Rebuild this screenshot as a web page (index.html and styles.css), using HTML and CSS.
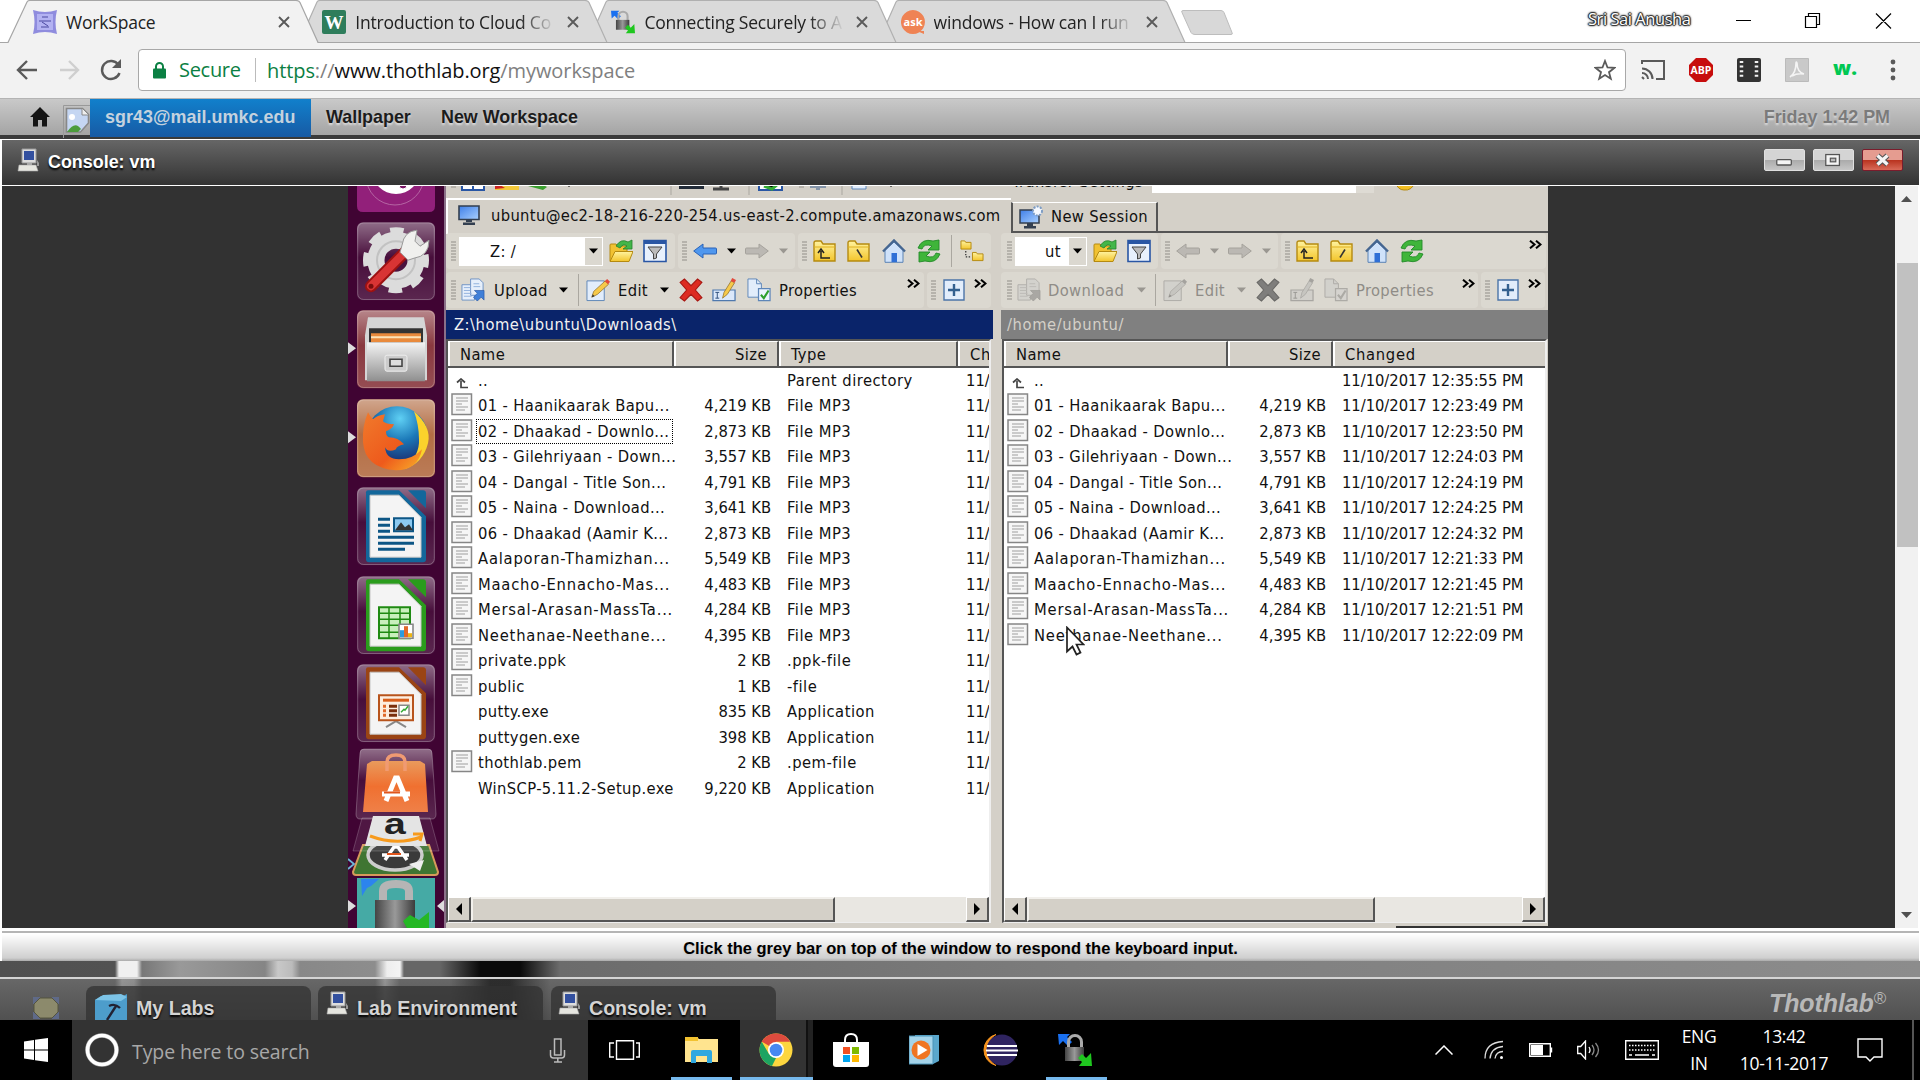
FILE: index.html
```html
<!DOCTYPE html>
<html lang="en">
<head>
<meta charset="utf-8">
<title>WorkSpace</title>
<link rel="stylesheet" href="styles.css">
</head>
<body>
<svg class="defs" width="0" height="0">
  <defs>
    <linearGradient id="gy" x1="0" y1="0" x2="0" y2="1"><stop offset="0" stop-color="#fff3a0"/><stop offset="1" stop-color="#f3c52c"/></linearGradient>
    <linearGradient id="gb" x1="0" y1="0" x2="1" y2="1"><stop offset="0" stop-color="#3f7fe8"/><stop offset="1" stop-color="#a9d0ff"/></linearGradient>
    <linearGradient id="gm" x1="0" y1="0" x2="1" y2="0"><stop offset="0" stop-color="#444"/><stop offset=".5" stop-color="#999"/><stop offset="1" stop-color="#3c3c3c"/></linearGradient>
    <linearGradient id="gs" x1="0" y1="0" x2="0" y2="1"><stop offset="0" stop-color="#f4f4f4"/><stop offset="1" stop-color="#8f8f8f"/></linearGradient>
    <linearGradient id="gor" x1="0" y1="0" x2="0" y2="1"><stop offset="0" stop-color="#e99a5c"/><stop offset=".5" stop-color="#f07030"/><stop offset="1" stop-color="#ef8048"/></linearGradient>
    <linearGradient id="gtile" x1="0" y1="0" x2="0" y2="1"><stop offset="0" stop-color="#fff" stop-opacity=".42"/><stop offset=".45" stop-color="#fff" stop-opacity=".04"/><stop offset="1" stop-color="#fff" stop-opacity=".14"/></linearGradient>
    <radialGradient id="gff" cx=".55" cy=".2" r=".8"><stop offset="0" stop-color="#5fd0f4"/><stop offset=".45" stop-color="#1b78b8"/><stop offset="1" stop-color="#1b1d60"/></radialGradient>
    <linearGradient id="gfox" x1="0" y1="0" x2="1" y2="1"><stop offset="0" stop-color="#f07a2c"/><stop offset=".6" stop-color="#ee5a1c"/><stop offset="1" stop-color="#f9b02a"/></linearGradient>
    <symbol id="grip" viewBox="0 0 5 20"><path d="M0 1h5M0 4h5M0 7h5M0 10h5M0 13h5M0 16h5M0 19h5" stroke="#aaa7a0" stroke-width="1.3"/></symbol>
    <symbol id="dd" viewBox="0 0 9 6"><path d="M0 .5h9L4.500 5.500z"/></symbol>
    <symbol id="folder" viewBox="0 0 24 24"><path d="M1 22V6q0-1 1-1h5l2 2h9v5" fill="#f1c232" stroke="#b58a10"/><path d="M1 22.500l5-10h18l-4 10z" fill="url(#gy)" stroke="#b58a10"/><path d="M7 7Q12-1 19 3l4-2v9h-9l4-3q-4-3-7 2z" fill="#43b649" stroke="#23822c" stroke-width=".8"/></symbol>
    <symbol id="filter" viewBox="0 0 24 24"><path d="M1 1.500h22v21H1z" fill="#e8f1fd" stroke="#2956a4" stroke-width="1.600"/><path d="M1 1h22v4H1z" fill="#2956a4"/><path d="M5 8h14l-5.500 7v4l-3 1v-5z" fill="#bbb" stroke="#444"/></symbol>
    <symbol id="back" viewBox="0 0 24 16"><path d="M.7 8L10 1v4h12.500q1 0 1 1v4q0 1-1 1H10v4z" fill="#4f97ee" stroke="#2a63b8"/></symbol>
    <symbol id="fwd" viewBox="0 0 24 16"><path d="M23.300 8L14 1v4H1.500q-1 0-1 1v4q0 1 1 1H14v4z" fill="#bbb8b3" stroke="#a5a29c"/></symbol>
    <symbol id="bk2" viewBox="0 0 24 16"><path d="M.7 8L10 1v4h12.500q1 0 1 1v4q0 1-1 1H10v4z" fill="#bbb8b3" stroke="#a5a29c"/></symbol>
    <symbol id="up" viewBox="0 0 24 22"><path d="M1 20V3q0-2 2-2h5l2 3h12v17H1z" fill="url(#gy)" stroke="#b58a10" stroke-width="1.400"/><path d="M1 7h21" stroke="#e0b020"/><path d="M17 18H8v-7M5 13l3-4 3 4" fill="none" stroke="#222" stroke-width="1.500"/></symbol>
    <symbol id="root" viewBox="0 0 24 22"><path d="M1 20V3q0-2 2-2h5l2 3h12v17H1z" fill="url(#gy)" stroke="#b58a10" stroke-width="1.400"/><path d="M1 7h21" stroke="#e0b020"/><path d="M10 9.500l5 8" fill="none" stroke="#333" stroke-width="1.600"/></symbol>
    <symbol id="root2" viewBox="0 0 24 22"><path d="M1 20V3q0-2 2-2h5l2 3h12v17H1z" fill="url(#gy)" stroke="#b58a10" stroke-width="1.400"/><path d="M1 7h21" stroke="#e0b020"/><path d="M15 9.500l-5 8" fill="none" stroke="#333" stroke-width="1.600"/></symbol>
    <symbol id="home" viewBox="0 0 24 24"><path d="M3 11v12.300h18V11L12 3z" fill="#cfe2fa" stroke="#5b83b5"/><path d="M1 12.500L12 1.500l11 11" fill="none" stroke="#456690" stroke-width="2.400"/><path d="M9.500 14h5.500v9H9.500z" fill="#2f6fd6"/></symbol>
    <symbol id="refresh" viewBox="0 0 24 24"><g fill="#3fb53a" stroke="#238a28" stroke-width=".9"><path d="M1 9Q5-1 16 2l6-1v10H11l4-4Q7 4 5 10z"/><path d="M23 15q-4 10-15 7l-6 1V13h11l-4 4q8 3 10-3z"/></g></symbol>
    <symbol id="tree" viewBox="0 0 25 24"><g fill="url(#gy)" stroke="#b58a10"><path d="M1 10V1.500h4l1 1.500h5.500v7z"/><path d="M13 22v-8.500h4l1 1.500h6v7z"/></g><path d="M6 12v6h6" fill="none" stroke="#333" stroke-dasharray="1.500 1.500" stroke-width="1.300"/></symbol>
    <symbol id="upload" viewBox="0 0 25 25"><path d="M1 7h13v16H1z" fill="#e6effb" stroke="#6e92c4"/><path d="M10 1h9l4 4v13H10z" fill="#e6effb" stroke="#6e92c4"/><path d="M3 10h7M3 13h7M3 16h8M3 19h8M13 6h6M13 9h7" stroke="#8fb0dc"/><path d="M14 13h10v10l-3-3-4 4-4-4 4-4z" fill="#3f7fd8" stroke="#2758a6" stroke-width=".7"/></symbol>
    <symbol id="edit" viewBox="0 0 25 25"><path d="M1 3h18v20.500H1z" fill="#e2edfb" stroke="#5e86b8"/><path d="M6 20l2-6L20 3l3.500 3.500L12 17z" fill="#f6c94a" stroke="#93722a" stroke-width=".8"/><path d="M19.500 3.500L22 1l3 3-2 2.500z" fill="#e24a3c"/><path d="M6 20l1-3 2 2z" fill="#333"/></symbol>
    <symbol id="del" viewBox="0 0 22 22"><path d="M1 4l4-3 6 6 6-6 4 3-6 7 6 7-4 3-6-6-6 6-4-3 6-7z" fill="#dd2c22" stroke="#a81712"/></symbol>
    <symbol id="rename" viewBox="0 0 25 25"><path d="M1 12.500h23v11H1z" fill="#dbe8fa" stroke="#4f79ae" stroke-width="1.300"/><path d="M3.500 15h4M3.500 21h4M5.500 15v6" stroke="#2d4e7c"/><path d="M11 21l1.500-6L20 3l3.500 2L16 17z" fill="#f6c94a" stroke="#93722a" stroke-width=".8"/><path d="M19.500 3L21 0l4 2-1.500 3z" fill="#e24a3c"/></symbol>
    <symbol id="props" viewBox="0 0 25 25"><path d="M1 1h9l5 5v14H1z" fill="#e2edfb" stroke="#5e86b8"/><path d="M10 1v5h5" fill="none" stroke="#5e86b8"/><path d="M12 11h12v12.500H12z" fill="#eaf3fe" stroke="#5e86b8" stroke-width="1.300"/><path d="M14.500 17.500l3 3.500 5-8" fill="none" stroke="#2da02d" stroke-width="2.200"/></symbol>
    <symbol id="plus" viewBox="0 0 22 22"><path d="M1 1h20v20H1z" fill="#e2edfb" stroke="#4c74a8" stroke-width="1.400"/><path d="M11 5v12M5 11h12" stroke="#33608f" stroke-width="2.400"/></symbol>
    <symbol id="more" viewBox="0 0 13 9"><path d="M1 .7l4.500 3.800L1 8.300M7 .7l4.500 3.800L7 8.300" fill="none" stroke="#000" stroke-width="2"/></symbol>
    <symbol id="file" viewBox="0 0 22 23"><path d="M1 1h19.500v20.500H1z" fill="#f6f6f6" stroke="#868686" stroke-width="1.500"/><path d="M5 5h12M5 8h12M5 11h6M5 14h12M5 17h9" stroke="#bcbcbc" stroke-width="1.300"/></symbol>
    <symbol id="parent" viewBox="0 0 12 11"><path d="M12 9.500H5V3M1 4.500L5 1l4 3.500" fill="none" stroke="#444" stroke-width="1.700"/></symbol>
    <symbol id="pc" viewBox="0 0 24 24"><path d="M5 1h14v14H5z" fill="#ddd" stroke="#999"/><path d="M7 3h10v9H7z" fill="#33509f"/><path d="M10 15h5v3h-5z" fill="#aaa"/><path d="M2 17h17l2 6H1z" fill="#e6e6e0" stroke="#aaa" stroke-width=".6"/><path d="M20 12v6h2v-3z" fill="#999"/></symbol>
    <symbol id="lockicon" viewBox="0 0 34 34"><path d="M0 1h12L9 4l5 5-4 4-5-5-4 4z" fill="#1a70f0"/><path d="M10.500 16V9a6 6 0 0 1 13 0v7" fill="none" stroke="#aaa" stroke-width="3"/><path d="M7 14h19v14H7z" fill="url(#gm)"/><path d="M34 33H21l3-4-4-4 4-4 4 4 5-5z" fill="#1fc71f"/></symbol>
    <symbol id="monitor" viewBox="0 0 22 20"><path d="M1 1h20v13.500H1z" fill="url(#gb)" stroke="#333f50" stroke-width="1.600"/><path d="M8 15h6v2H8zM5 17.500h12V20H5z" fill="#333f50"/></symbol>
    <symbol id="x" viewBox="0 0 12 12"><path d="M1 1l10 10M11 1L1 11" fill="none" stroke="#5a5a5a" stroke-width="1.900"/></symbol>
    <symbol id="tile" viewBox="0 0 78 78"><rect width="78" height="78" rx="6" fill="url(#gtile)"/><rect x=".7" y=".7" width="76.600" height="76.600" rx="6" fill="none" stroke="#fff" stroke-opacity=".25"/></symbol>
    <symbol id="sheet" viewBox="0 0 78 78"><path d="M11 3h31l27 26v43q0 3-3 3H12q-3 0-3-3V5q0-2 2-2z" fill="currentColor"/><path d="M51 3h15q3 0 3 3v15z" fill="currentColor"/><path d="M13 8h29l22 22v40H13z" fill="#f4f4f4" stroke="#c4c4c4"/></symbol>
  </defs>
</svg>

<div class="screen">
  <header class="tabstrip">
    <svg class="tabshapes" width="1250" height="43" viewBox="0 0 1250 43">
      <g fill="#dadada" stroke="#b0b0b0" stroke-width="1.200">
        <path d="M878 42.500L896 2q1-1.500 3-1.500h264q3 0 4 2l18 40z"/>
        <path d="M588 42.500L606 2q1-1.500 3-1.500h265q3 0 4 2l18 40z"/>
        <path d="M299 42.500L317 2q1-1.500 3-1.500h265q3 0 4 2l18 40z"/>
      </g>
      <path d="M0 42.500h1250" stroke="#a6a6a6"/>
      <path d="M0 42.500h8L27 2q1-1.500 3-1.500h266q3 0 4 2l18 40V44H0z" fill="#f2f2f2" stroke="#a6a6a6" stroke-width="1.200"/>
      <path d="M1183 10.500h38q2 0 3 2l8 20q1 2-1 2h-36q-3 0-4-2l-9-20q-1-2 1-2z" fill="#d8d8d8" stroke="#bdbdbd"/>
    </svg>
    <div class="tab">
      <svg class="fav" viewBox="0 0 24 24"><path d="M0 0q12 4 24 0-3 12 0 24-12-4-24 0 3-12 0-24z" fill="#8f8cde"/><path d="M4 4h16v16H4z" fill="#b3b2f2"/><path d="M9 7h6M6 11h12M8 17h8M9 12l6 4" stroke="#4a48a0"/></svg>
      <span class="title">WorkSpace</span><svg class="close"><use href="#x"/></svg>
    </div>
    <div class="tab">
      <svg class="fav" viewBox="0 0 24 24"><rect width="24" height="24" rx="2" fill="#2e7d5b"/><text class="favw" x="12" y="19" text-anchor="middle">W</text></svg>
      <span class="title fade">Introduction to Cloud Co</span><svg class="close"><use href="#x"/></svg>
    </div>
    <div class="tab">
      <svg class="fav"><use href="#lockicon"/></svg>
      <span class="title fade">Connecting Securely to A</span><svg class="close"><use href="#x"/></svg>
    </div>
    <div class="tab">
      <svg class="fav" viewBox="0 0 24 24"><path d="M12 0a12 12 0 1 1-.1 0zM16 21h7v3z" fill="#ef8354"/><text class="favask" x="12" y="15.500" text-anchor="middle">ask</text></svg>
      <span class="title fade">windows - How can I run</span><svg class="close"><use href="#x"/></svg>
    </div>
    <div class="winctl">
      <span class="profile">Sri Sai Anusha</span>
      <svg width="160" height="20" viewBox="0 0 160 20" fill="none" stroke="#000" stroke-width="1.200"><path d="M2 10.500h15M71.500 6.500h11v11h-11zM74.500 6.500v-3h11v11h-3M142 3.500l15 15M157 3.500l-15 15"/></svg>
    </div>
  </header>

  <div class="toolbar">
    <svg class="nav" viewBox="0 0 125 56" fill="none" stroke="#5a5a5a" stroke-width="2.400"><path d="M37 27H19M27 18l-9 9 9 9"/><path d="M60 27h18M69 18l9 9-9 9" stroke="#cfcfcf"/><path d="M118.500 22a9 9 0 1 0 1 8"/><path d="M121 16v9h-9z" fill="#5a5a5a" stroke="none"/></svg>
    <div class="omnibox">
      <svg width="13" height="17" viewBox="0 0 13 17"><path d="M3 7V4.500a3.500 3.500 0 0 1 7 0V7" fill="none" stroke="#0b8043" stroke-width="2"/><rect y="6.500" width="13" height="10" rx="1" fill="#0b8043"/></svg>
      <span class="secure">Secure</span>
      <span class="url"><b>https</b>://<i>www.thothlab.org</i>/myworkspace</span>
      <svg class="star" width="22" height="22" viewBox="0 0 22 22"><path d="M11 2l2.500 6.500 6.800.4-5.300 4.300 1.800 6.600L11 16.100l-5.800 3.700L7 13.200 1.700 8.900l6.800-.4z" fill="none" stroke="#5a5a5a" stroke-width="1.800"/></svg>
    </div>
    <div class="exts">
      <svg viewBox="0 0 24 22" fill="none" stroke="#5a5a5a" stroke-width="2"><path d="M1 5V2h22v18h-8M1 14a6 6 0 0 1 6 6M1 9.500A10.500 10.500 0 0 1 11.500 20M1 18l2 2"/></svg>
      <svg viewBox="0 0 24 24"><path d="M7 0h10l7 7v10l-7 7H7l-7-7V7z" fill="#c70d0d"/><text class="abp" x="12" y="16" text-anchor="middle">ABP</text></svg>
      <svg viewBox="0 0 24 24"><rect width="24" height="24" rx="2" fill="#333"/><path d="M4.500 3v18M19.500 3v18" stroke="#f2f2f2" stroke-width="3.500" stroke-dasharray="2 2.600"/></svg>
      <svg viewBox="0 0 24 24"><path d="M.5.500h23v23H.5z" fill="#c9c9c9" stroke="#bbb"/><path d="M5 19q6-4 6-14 0-2 1 0 0 9 7 11-7-1-12 2" fill="none" stroke="#f4f4f4" stroke-width="1.600"/></svg>
      <span class="wdot">w.</span>
      <svg viewBox="0 0 24 24" fill="#5a5a5a"><circle cx="12" cy="4" r="2.400"/><circle cx="12" cy="12" r="2.400"/><circle cx="12" cy="20" r="2.400"/></svg>
    </div>
  </div>

  <nav class="pagebar">
    <svg class="house" viewBox="0 0 20 20"><path d="M10 0l10 10h-3v9.500h-5V13H8v6.500H3V10H0z" fill="#151515"/></svg>
    <svg class="broken" viewBox="0 0 27 33"><path d="M.5 33V.5H27" fill="none" stroke="#999"/><path d="M3.500 3.500h16l6 6V18l-8 9h-14z" fill="#c5d6f2" stroke="#888" stroke-width="1.600"/><path d="M4 27q8-12 14-3l-3 3z" fill="#4c9c3c"/><path d="M19 3v7h7z" fill="#eee" stroke="#888"/><circle cx="9" cy="12" r="3" fill="#fff"/></svg>
    <span class="user">sgr43@mail.umkc.edu</span>
    <span class="m1">Wallpaper</span>
    <span class="m2">New Workspace</span>
    <span class="clock">Friday 1:42 PM</span>
  </nav>

  <div class="contitle">
    <svg width="24" height="24"><use href="#pc"/></svg>
    <span>Console: vm</span>
    <div class="conbtns">
      <svg viewBox="0 0 41 22"><rect x="12" y="10.500" width="16" height="6" rx="1" fill="#f5f5f5" stroke="#555" stroke-width="1.400"/></svg>
      <svg viewBox="0 0 41 22"><rect x="12" y="5" width="15" height="12" fill="#f5f5f5" stroke="#555" stroke-width="1.400"/><rect x="17" y="9" width="6" height="4" fill="#bbb" stroke="#555" stroke-width="1.300"/></svg>
      <svg class="red" viewBox="0 0 41 22"><path d="M15 6l11 10M26 6L15 16" stroke="#555" stroke-width="6"/><path d="M15 6l11 10M26 6L15 16" stroke="#f5f5f5" stroke-width="3.500"/></svg>
    </div>
  </div>

  <main class="console">
    <aside class="launcher">
      <svg class="dash" viewBox="0 0 97 26"><path d="M9 0h78v20q0 6-6 6H15q-6 0-6-6z" fill="#92207a"/><circle cx="47" cy="-10" r="29" fill="none" stroke="#b565a3"/><circle cx="48" cy="-16" r="24" fill="#fff"/><circle cx="48" cy="-18" r="16" fill="#92207a"/><circle cx="55" cy="-1" r="4" fill="#7a1565" stroke="#fff"/></svg>
      <svg class="app" viewBox="0 0 97 88"><g transform="translate(9)"><use href="#tile" width="78" height="78"/><circle cx="39" cy="38" r="20" fill="none" stroke="#dcdcdc" stroke-width="17"/><circle cx="39" cy="38" r="29" fill="none" stroke="#dcdcdc" stroke-width="8" stroke-dasharray="13 9.800" stroke-dashoffset="6"/><circle cx="39" cy="38" r="19" fill="none" stroke="#c2c2c2" stroke-width="2"/><path d="M50 28L14 64" stroke="#9c1212" stroke-width="12" stroke-linecap="round"/><path d="M50 28L14 64" stroke="#d83434" stroke-width="8" stroke-linecap="round"/><circle cx="14" cy="64" r="2.500" fill="#7a0e0e"/><path d="M45 23q2-14 15-15l-2 11 5 5 9-6q0 16-15 18l-6 2-8-8z" fill="#f0f0ee" stroke="#999"/></g></svg>
      <svg class="app" viewBox="0 0 97 88"><g transform="translate(9)"><rect width="78" height="78" rx="6" fill="#843037"/><use href="#tile" width="78" height="78"/><path d="M11 7h56l3 18v45H8V25z" fill="#d5d5d5"/><path d="M12 18h54v16H12z" fill="#333"/><path d="M14 23h50v9H14z" fill="#e98a3c"/><path d="M14 26h50v2H14z" fill="#fde3b8"/><path d="M10 32h58v39H10z" fill="url(#gs)"/><rect x="28" y="45" width="22" height="16" rx="2" fill="#ccc" stroke="#eee"/><path d="M33 49h12v7H33z" fill="#ddd" stroke="#444" stroke-width="1.600"/></g><path d="M0 32l8 6-8 6z" fill="#ddd"/></svg>
      <svg class="app" viewBox="0 0 97 88"><g transform="translate(9)"><rect width="78" height="78" rx="6" fill="#b0673c"/><use href="#tile" width="78" height="78"/><circle cx="40" cy="38" r="31" fill="url(#gff)"/><path d="M57 12q18 16 14 32-5 20-24 26 16-14 15-30 0-14-5-28z" fill="#fbd22c"/><path d="M11 13q2 4 5 7 4-4 12-5l-2 7q3 3 11 3-2 5-8 7 0 5 3 6 9 0 15 7-8 2-8 5-8 4-11-2 1 12 14 12 14 0 23-10-4 21-26 21Q8 69 6 43q-1-16 5-30z" fill="url(#gfox)"/></g><path d="M0 32l8 6-8 6z" fill="#ddd"/></svg>
      <svg class="app writer" viewBox="0 0 97 88"><g transform="translate(9)"><use href="#tile" width="78" height="78"/><use href="#sheet" width="78" height="78"/><path d="M21 32h12M21 38h12M21 44h12M21 50h36M21 56h36M21 62h27" stroke="#0d5685" stroke-width="3"/><path d="M37 31h19v13H37z" fill="#8cc9f0" stroke="#0d5685" stroke-width="2"/><path d="M38 43l6-8 4 5 4-3 4 6z" fill="#333"/></g></svg>
      <svg class="app calc" viewBox="0 0 97 88"><g transform="translate(9)"><use href="#tile" width="78" height="78"/><use href="#sheet" width="78" height="78"/><path d="M22 31h31v31H22z" fill="#c9f0bd" stroke="#1f8a12" stroke-width="2"/><path d="M22 37h31M22 43h31M22 49h31M22 56h31M32 31v31M43 31v31" stroke="#1f8a12" stroke-width="1.500"/><path d="M42 48h14v14H42z" fill="#fff" stroke="#888" stroke-width="1.600"/><path d="M43 54h4v7h-4z" fill="#2a9be0"/><path d="M47 50h4v11h-4z" fill="#e0692a"/><path d="M51 57h4v4h-4z" fill="#edb512"/></g></svg>
      <svg class="app impress" viewBox="0 0 97 88"><g transform="translate(9)"><use href="#tile" width="78" height="78"/><use href="#sheet" width="78" height="78"/><path d="M39 57l-10 6M39 57l10 6" stroke="#888" stroke-width="2"/><path d="M22 31h34v25H22z" fill="#fdeee0" stroke="#b8541c" stroke-width="2"/><path d="M26 36h26" stroke="#d85f1c" stroke-width="3"/><path d="M26 42h3M26 46.500h3M26 51h3" stroke="#e0692a" stroke-width="3"/><path d="M32 42h8M32 46.500h8M32 51h8" stroke="#7a2f0c" stroke-width="3"/><path d="M42 41h10v10H42z" fill="#fff" stroke="#888" stroke-width="1.500"/><path d="M44 48l3-3 1 1 3-4" fill="none" stroke="#3a3" stroke-width="1.500"/></g></svg>
      <svg class="stack" viewBox="0 0 97 180"><path d="M16 1h64q4 0 4 4l4 61q0 5-4 5H12q-4 0-4-5l4-61q0-4 4-4z" fill="url(#gtile)" stroke="#fff" stroke-opacity=".25"/><path d="M19 16l5-3h48l5 3 3 48H15z" fill="url(#gor)"/><path d="M39 23v-9q0-7 9-7t9 7v9" fill="none" stroke="#f09a72" stroke-width="3.500"/><path d="M38 53l9.500-23h2L59 53M34 46h28" fill="none" stroke="#fff" stroke-width="5"/><path d="M36 44.500h16" stroke="#e0551c" stroke-width="2"/>
        <path d="M15 97h66l9 27q0 3-3 3H8q-3 0-3-3z" fill="#3f7532" stroke="#d69a5a" stroke-width="2"/><ellipse cx="47" cy="107" rx="27" ry="15" fill="#3a3a3a" stroke="#ccc" stroke-width="3.500"/><path d="M76 112l-4 11-11-7z" fill="#eee"/><path d="M37 112l9-13h4l9 13M34 107h27" fill="none" stroke="#fff" stroke-width="3.500"/><path d="M39 106h14" stroke="#e0551c" stroke-width="2"/>
        <path d="M14 70h68l9 33H5z" fill="#fff" fill-opacity=".08" stroke="#fff" stroke-opacity=".2"/><path d="M25 68h46l8 30H17z" fill="#e4e4e4"/><text class="amz" transform="translate(47 86) scale(1.35 1)" text-anchor="middle">a</text><path d="M22 88q27 10 51 1M65 86l9 0-2 7" fill="none" stroke="#f79a1c" stroke-width="3"/>
        <path d="M9 130h78v50H9z" fill="#45aaa5"/><path d="M13 131h18l-8 7-4 2-5 8z" fill="#2c84ee"/><path d="M35 154v-11q0-7 13-7 13 0 13 7v11" fill="none" stroke="#b5b5b5" stroke-width="8"/><path d="M27 152h40v28H27z" fill="url(#gm)"/><path d="M55 173l7-6 9 5 10-8v18H60z" fill="#25b825"/><path d="M0 152l8 6-8 6zM96 152l-7 6 7 6z" fill="#ddd"/><path d="M0 111l6 5-6 5" fill="none" stroke="#6db6d8" stroke-width="1.800"/></svg>
    </aside>

    <section class="scp">
      <div class="cuttop">
        <svg width="530" height="12" viewBox="0 0 530 12"><g fill="#fff" stroke="#2956a4" stroke-width="2"><path d="M16-5h22v9H16zM27-5v9M313-5h23v9h-23z"/></g><path d="M49-5h24v9H49z" fill="#f2c83a"/><path d="M49-4l10 6-10 1z" fill="#c22"/><path d="M82 0l10-4 9 5-4 3z" fill="#3a9f2e"/><path d="M233-5h25v8h-25z" fill="#222b38"/><path d="M267 3h16M275-4v8" stroke="#444" stroke-width="3"/><path d="M318 0l8 3 6-5" stroke="#3a3" stroke-width="3"/><path d="M364 0h16M372-4v8" stroke="#8494a8" stroke-width="4"/><path d="M406-5h14v8h-14z" fill="#e2edfb" stroke="#5e86b8"/><path d="M225 0v9M303 0v9M396 0v9" stroke="#aaa7a0"/><path d="M5 1h5M353 1h5" stroke="#aaa7a0" stroke-width="1.500"/><path d="M442-2h6l-3 3zM120-2h6l-3 3z"/></svg>
        <span>Transfer Settings</span>
        <i></i>
        <svg width="24" height="10" viewBox="0 0 24 10"><path d="M1-4h20Q18 5 10 4 4 4 1-4z" fill="#f3bf22" stroke="#b58a10"/></svg>
      </div>
      <div class="sessions">
        <div class="sess on"><svg width="22" height="20"><use href="#monitor"/></svg><span>ubuntu@ec2-18-216-220-254.us-east-2.compute.amazonaws.com</span></div>
        <div class="sess off"><svg width="25" height="24" viewBox="0 0 25 24"><path d="M1 5h19v13H1z" fill="url(#gb)" stroke="#333f50" stroke-width="1.500"/><path d="M8 18h6v3H8zM5 21h12v2.500H5z" fill="#333f50"/><circle cx="18.500" cy="6" r="4.500" fill="#f5f9ff" stroke="#7d9cc4" stroke-width="2" stroke-dasharray="2 1.300"/></svg><span>New Session</span></div>
      </div>

      <div class="panes">
        <div class="pane local">
          <div class="tbrow">
            <div class="grp a1"><svg class="grip"><use href="#grip"/></svg><div class="combo"><span>Z: /</span><em><svg class="dd"><use href="#dd"/></svg></em></div><svg class="ic"><use href="#folder"/></svg><svg class="ic"><use href="#filter"/></svg></div>
            <div class="grp b1"><svg class="grip"><use href="#grip"/></svg><svg class="ic"><use href="#back"/></svg><svg class="dd"><use href="#dd"/></svg><svg class="ic"><use href="#fwd"/></svg><svg class="dd gray"><use href="#dd"/></svg></div>
            <div class="grp c1"><svg class="grip"><use href="#grip"/></svg><svg class="ic"><use href="#up"/></svg><svg class="ic"><use href="#root"/></svg><svg class="ic"><use href="#home"/></svg><svg class="ic"><use href="#refresh"/></svg><b class="sep"></b><svg class="ic"><use href="#tree"/></svg></div>
          </div>
          <div class="tbrow two">
            <div class="grp d1"><svg class="grip"><use href="#grip"/></svg><svg class="ic"><use href="#upload"/></svg><span>Upload</span><svg class="dd"><use href="#dd"/></svg><b class="sep"></b><svg class="ic"><use href="#edit"/></svg><span>Edit</span><svg class="dd"><use href="#dd"/></svg><svg class="ic"><use href="#del"/></svg><svg class="ic"><use href="#rename"/></svg><svg class="ic"><use href="#props"/></svg><span>Properties</span><svg class="more"><use href="#more"/></svg></div>
            <div class="grp e1"><svg class="grip"><use href="#grip"/></svg><svg class="pl"><use href="#plus"/></svg><svg class="more"><use href="#more"/></svg></div>
          </div>
          <div class="path">Z:\home\ubuntu\Downloads\</div>
          <div class="list">
            <div class="head"><span>Name</span><span class="r">Size</span><span>Type</span><span>Ch</span></div>
            <div class="rows">
              <div class="row up"><svg><use href="#parent"/></svg><span>..</span><span></span><span>Parent directory</span><span>11/</span></div>
              <div class="row"><svg><use href="#file"/></svg><span>01 - Haanikaarak Bapu...</span><span>4,219 KB</span><span>File MP3</span><span>11/</span></div>
              <div class="row focus"><svg><use href="#file"/></svg><span>02 - Dhaakad - Downlo...</span><span>2,873 KB</span><span>File MP3</span><span>11/</span></div>
              <div class="row"><svg><use href="#file"/></svg><span>03 - Gilehriyaan - Down...</span><span>3,557 KB</span><span>File MP3</span><span>11/</span></div>
              <div class="row"><svg><use href="#file"/></svg><span>04 - Dangal - Title Son...</span><span>4,791 KB</span><span>File MP3</span><span>11/</span></div>
              <div class="row"><svg><use href="#file"/></svg><span>05 - Naina - Download...</span><span>3,641 KB</span><span>File MP3</span><span>11/</span></div>
              <div class="row"><svg><use href="#file"/></svg><span>06 - Dhaakad (Aamir K...</span><span>2,873 KB</span><span>File MP3</span><span>11/</span></div>
              <div class="row wide"><svg><use href="#file"/></svg><span>Aalaporan-Thamizhan...</span><span>5,549 KB</span><span>File MP3</span><span>11/</span></div>
              <div class="row wide"><svg><use href="#file"/></svg><span>Maacho-Ennacho-Mas...</span><span>4,483 KB</span><span>File MP3</span><span>11/</span></div>
              <div class="row wide"><svg><use href="#file"/></svg><span>Mersal-Arasan-MassTa...</span><span>4,284 KB</span><span>File MP3</span><span>11/</span></div>
              <div class="row wide"><svg><use href="#file"/></svg><span>Neethanae-Neethane...</span><span>4,395 KB</span><span>File MP3</span><span>11/</span></div>
              <div class="row"><svg><use href="#file"/></svg><span>private.ppk</span><span>2 KB</span><span>.ppk-file</span><span>11/</span></div>
              <div class="row"><svg><use href="#file"/></svg><span>public</span><span>1 KB</span><span>-file</span><span>11/</span></div>
              <div class="row"><svg></svg><span>putty.exe</span><span>835 KB</span><span>Application</span><span>11/</span></div>
              <div class="row"><svg></svg><span>puttygen.exe</span><span>398 KB</span><span>Application</span><span>11/</span></div>
              <div class="row"><svg><use href="#file"/></svg><span>thothlab.pem</span><span>2 KB</span><span>.pem-file</span><span>11/</span></div>
              <div class="row"><svg></svg><span>WinSCP-5.11.2-Setup.exe</span><span>9,220 KB</span><span>Application</span><span>11/</span></div>
            </div>
            <div class="hscroll"><b><svg viewBox="0 0 8 12"><path d="M7 0v12L1 6z"/></svg></b><i></i><u></u><b><svg viewBox="0 0 8 12"><path d="M1 0v12l6-6z"/></svg></b></div>
          </div>
        </div>

        <div class="pane remote">
          <div class="tbrow">
            <div class="grp a2"><svg class="grip"><use href="#grip"/></svg><div class="combo"><span>ut</span><em><svg class="dd"><use href="#dd"/></svg></em></div><svg class="ic"><use href="#folder"/></svg><svg class="ic"><use href="#filter"/></svg></div>
            <div class="grp b1"><svg class="grip"><use href="#grip"/></svg><svg class="ic"><use href="#bk2"/></svg><svg class="dd gray"><use href="#dd"/></svg><svg class="ic"><use href="#fwd"/></svg><svg class="dd gray"><use href="#dd"/></svg></div>
            <div class="grp c2"><svg class="grip"><use href="#grip"/></svg><svg class="ic"><use href="#up"/></svg><svg class="ic"><use href="#root2"/></svg><svg class="ic"><use href="#home"/></svg><svg class="ic"><use href="#refresh"/></svg><svg class="more"><use href="#more"/></svg></div>
          </div>
          <div class="tbrow two">
            <div class="grp d2"><svg class="grip"><use href="#grip"/></svg><svg class="ic off"><use href="#upload"/></svg><span>Download</span><svg class="dd gray"><use href="#dd"/></svg><b class="sep"></b><svg class="ic off"><use href="#edit"/></svg><span>Edit</span><svg class="dd gray"><use href="#dd"/></svg><svg class="ic off dk"><use href="#del"/></svg><svg class="ic off"><use href="#rename"/></svg><svg class="ic off"><use href="#props"/></svg><span>Properties</span><svg class="more"><use href="#more"/></svg></div>
            <div class="grp e1"><svg class="grip"><use href="#grip"/></svg><svg class="pl"><use href="#plus"/></svg><svg class="more"><use href="#more"/></svg></div>
          </div>
          <div class="path">/home/ubuntu/</div>
          <div class="list">
            <div class="head"><span>Name</span><span class="r">Size</span><span>Changed</span></div>
            <div class="rows">
              <div class="row up"><svg><use href="#parent"/></svg><span>..</span><span></span><span>11/10/2017 12:35:55 PM</span></div>
              <div class="row"><svg><use href="#file"/></svg><span>01 - Haanikaarak Bapu...</span><span>4,219 KB</span><span>11/10/2017 12:23:49 PM</span></div>
              <div class="row"><svg><use href="#file"/></svg><span>02 - Dhaakad - Downlo...</span><span>2,873 KB</span><span>11/10/2017 12:23:50 PM</span></div>
              <div class="row"><svg><use href="#file"/></svg><span>03 - Gilehriyaan - Down...</span><span>3,557 KB</span><span>11/10/2017 12:24:03 PM</span></div>
              <div class="row"><svg><use href="#file"/></svg><span>04 - Dangal - Title Son...</span><span>4,791 KB</span><span>11/10/2017 12:24:19 PM</span></div>
              <div class="row"><svg><use href="#file"/></svg><span>05 - Naina - Download...</span><span>3,641 KB</span><span>11/10/2017 12:24:25 PM</span></div>
              <div class="row"><svg><use href="#file"/></svg><span>06 - Dhaakad (Aamir K...</span><span>2,873 KB</span><span>11/10/2017 12:24:32 PM</span></div>
              <div class="row wide"><svg><use href="#file"/></svg><span>Aalaporan-Thamizhan...</span><span>5,549 KB</span><span>11/10/2017 12:21:33 PM</span></div>
              <div class="row wide"><svg><use href="#file"/></svg><span>Maacho-Ennacho-Mas...</span><span>4,483 KB</span><span>11/10/2017 12:21:45 PM</span></div>
              <div class="row wide"><svg><use href="#file"/></svg><span>Mersal-Arasan-MassTa...</span><span>4,284 KB</span><span>11/10/2017 12:21:51 PM</span></div>
              <div class="row wide"><svg><use href="#file"/></svg><span>Neethanae-Neethane...</span><span>4,395 KB</span><span>11/10/2017 12:22:09 PM</span></div>
            </div>
            <div class="hscroll"><b><svg viewBox="0 0 8 12"><path d="M7 0v12L1 6z"/></svg></b><i></i><u></u><b><svg viewBox="0 0 8 12"><path d="M1 0v12l6-6z"/></svg></b></div>
          </div>
          <div class="edge"></div>
        </div>
      </div>
    </section>

    <div class="vscroll"><svg viewBox="0 0 11 6"><path d="M0 6h11L5.500 0z"/></svg><i></i><svg viewBox="0 0 11 6"><path d="M0 0h11L5.500 6z"/></svg></div>
    <svg class="cursor" viewBox="0 0 19 30"><path d="M1 1.500v24l5.500-5 4 8 4-2-4-8h7z" fill="#fff" stroke="#222" stroke-width="1.700"/></svg>
  </main>

  <div class="hint">Click the grey bar on top of the window to respond the keyboard input.</div>
  <div class="wall"></div>
  <div class="dock">
    <svg class="show" viewBox="0 0 28 24"><path d="M1 1h7v7H1zM20 1h7v7h-7zM1 16h7v7H1zM20 16h7v7h-7z" fill="#5f6a88"/><path d="M8 2h12l6 6v8l-6 6H8l-6-6V8z" fill="#8c8a6c" stroke="#55543f"/></svg>
    <div class="dtab"><svg class="labs" viewBox="0 0 33 26"><path d="M1 6l6-4h22l4-2v26H1z" fill="#4d9dcb"/><path d="M1 6l8-5 18-1 6 3-6 4z" fill="#7cc3e6"/><path d="M13 26l9-14M15 12q6-3 11 2" fill="none" stroke="#223" stroke-width="2.400"/></svg><span>My Labs</span></div>
    <div class="dtab pcs"><svg class="pcv"><use href="#pc"/></svg><span>Lab Environment</span></div>
    <div class="dtab pcs t3"><svg class="pcv"><use href="#pc"/></svg><span>Console: vm</span></div>
    <div class="brand">Thothlab<sup>®</sup></div>
  </div>

  <footer class="taskbar">
    <div class="start"><svg width="24" height="24" viewBox="0 0 24 24"><path d="M0 3.400l10-1.500v9.600H0zM11 1.700L24 0v11.500H11zM0 12.500h10v9.600L0 20.600zM11 12.500h13V24l-13-1.700z" fill="#fff"/></svg></div>
    <div class="search">
      <svg width="34" height="34" viewBox="0 0 34 34"><circle cx="17" cy="17" r="14.500" fill="none" stroke="#999" stroke-width="4.600"/><circle cx="17" cy="17" r="14.500" fill="none" stroke="#fff" stroke-width="3.600"/></svg>
      <span>Type here to search</span>
      <svg width="18" height="25" viewBox="0 0 18 25"><path d="M5.500 1h6.500v16H5.500zM1.500 12v5q0 3 3 3h8q3 0 3-3v-5M8.800 20v4M5 24h8" fill="none" stroke="#bbb" stroke-width="1.500"/></svg>
    </div>
    <div class="tk tv"><svg width="31" height="20" viewBox="0 0 31 20"><path d="M7.500.7h17v18.600h-17zM5 3H.7v14H5M27 3h3.300v14H27" fill="none" stroke="#fff" stroke-width="1.400"/></svg></div>
    <div class="tk ex"><svg width="33" height="28" viewBox="0 0 33 28"><path d="M0 1h12l2 2h19v23H0z" fill="#ffe48f"/><path d="M0 1h13v4H0z" fill="#f2c230"/><path d="M6 27V16q0-2 2-2h17q2 0 2 2v11h-5v-7H11v7z" fill="#2fa8e0"/></svg></div>
    <div class="tk ch"><svg width="34" height="34" viewBox="0 0 34 34"><circle cx="17" cy="17" r="16.500" fill="#fdd63f"/><path d="M17 17L2.700 8.700A16.500 16.500 0 0 1 31.300 8.700H17z" fill="#dd4b3e"/><path d="M2.700 8.700L10 21l7 4-4 8A16.500 16.500 0 0 1 2.700 8.700z" fill="#1da462"/><circle cx="17" cy="17" r="8" fill="#fff"/><circle cx="17" cy="17" r="6.300" fill="#4688f1"/></svg></div>
    <div class="tk st"><svg width="36" height="34" viewBox="0 0 36 34"><path d="M12 9V7q0-6 6-6t6 6v2" fill="none" stroke="#fff" stroke-width="2"/><path d="M0 9h36v22q0 3-3 3H3q-3 0-3-3z" fill="#fff"/><path d="M10 14h7v7h-7z" fill="#f25022"/><path d="M19 14h7v7h-7z" fill="#7fba00"/><path d="M10 22h7v7h-7z" fill="#00a4ef"/><path d="M19 22h7v7h-7z" fill="#ffb900"/></svg></div>
    <div class="tk md"><svg width="30" height="30" viewBox="0 0 30 30"><path d="M6 0h24v26l-6 3H6z" fill="#5aa7cc"/><path d="M0 1h24v28H0z" fill="#a5d4ea" stroke="#4a94b8"/><circle cx="12" cy="15" r="9.500" fill="#f07522"/><path d="M8.500 9v12l10-6z" fill="#fff"/></svg></div>
    <div class="tk ec"><svg width="36" height="34" viewBox="0 0 36 34"><path d="M14 1.500A16 16 0 0 0 14 32.500 18 18 0 0 1 14 1.500z" fill="#f7941e" stroke="#f7941e"/><circle cx="20" cy="17" r="15.500" fill="#2f2460"/><path d="M5 13h30M4 17.500h32M5 22h30" stroke="#fff" stroke-width="2"/></svg></div>
    <div class="tk wc"><svg width="34" height="34"><use href="#lockicon"/></svg></div>
    <div class="tray">
      <svg class="chev" viewBox="0 0 18 10"><path d="M.5 9.500L9 1l8.500 8.500" fill="none" stroke="#fff" stroke-width="1.500"/></svg>
      <svg class="wifi" viewBox="0 0 20 19" fill="none" stroke="#ddd" stroke-width="1.300"><path d="M1 18Q1 2 19 1M6 18Q7 7 19 6M11 18q1-7 8-7"/><circle cx="17.500" cy="17" r="1.500" fill="#fff" stroke="none"/></svg>
      <svg class="bat" viewBox="0 0 24 14"><path d="M.7.700h20.600v12.600H.7zM22.500 4.500v5" fill="none" stroke="#fff" stroke-width="1.400"/><path d="M2 2h12v10H2z" fill="#fff"/></svg>
      <svg class="spk" viewBox="0 0 23 20" fill="none" stroke="#fff" stroke-width="1.300"><path d="M.7 6.500h3L8.500 1v18l-4.800-5.500h-3zM12 7q2 3 0 6"/><path d="M15 5q4 5 0 10M18.500 3q6 7 0 14" stroke="#888"/></svg>
      <svg class="kbd" viewBox="0 0 34 20" fill="none" stroke="#fff"><path d="M.7.700h32.600v18.600H.7z" stroke-width="1.400"/><path d="M4 5.500h26M4 10h26" stroke-dasharray="1.500 1.500" stroke-width="1.400"/><path d="M4 15h3M10 15h14M27 15h3" stroke-width="1.400"/></svg>
      <div class="lang"><span>ENG</span><span>IN</span></div>
      <div class="time"><span>13:42</span><span>10-11-2017</span></div>
      <svg class="note" viewBox="0 0 26 25"><path d="M1 1h24v18h-8l-4 4-4-4H1z" fill="none" stroke="#fff" stroke-width="1.400"/></svg>
    </div>
  </footer>
</div>
</body>
</html>
```
FILE: styles.css
```css
* { box-sizing: border-box; }
body { margin: 0; overflow: hidden; }
svg { display: block; flex: none; }
.defs { position: absolute; }
.screen {
  width: 1920px; height: 1080px; display: flex; flex-direction: column; overflow: hidden;
  background: #fff; font-family: "Open Sans", sans-serif; color: #222;
}

/* browser tabs */
.tabstrip { position: relative; height: 43px; display: flex; padding-left: 9px; border-bottom: 1px solid #a6a6a6; flex: none; }
.tabshapes { position: absolute; left: 0; top: 0; }
.tab { position: relative; width: 289.2px; display: flex; align-items: center; padding: 1px 0 0 24px; }
.fav { width: 24px; height: 24px; margin-right: 9px; }
.favw { font: bold 19px "Liberation Serif", serif; fill: #fff; }
.favask { font: bold 11px "Open Sans", sans-serif; fill: #fff; }
.title { width: 200px; font-size: 17.5px; letter-spacing: -.2px; white-space: nowrap; overflow: hidden; }
.fade { -webkit-mask-image: linear-gradient(90deg, #000 165px, transparent 200px); mask-image: linear-gradient(90deg, #000 165px, transparent 200px); }
.close { width: 12px; height: 12px; margin-left: 12px; }
.winctl { position: relative; margin-left: auto; width: 332px; display: flex; align-items: flex-start; }
.profile { width: 146px; margin-top: 8px; font-size: 16.5px; line-height: 22px; letter-spacing: -.45px; color: #fff; text-shadow: 0 0 1px #222, 0 0 2px #222, 1px 0 1px #333, -1px 0 1px #333, 0 1px 1px #333, 0 -1px 1px #333, 0 0 3px #222; }
.winctl svg { margin-top: 10px; }

/* address bar */
.toolbar { height: 55px; background: #f2f2f2; display: flex; flex: none; }
.nav { width: 125px; height: 56px; }
.omnibox { width: 1488px; height: 42px; margin: 6px 0 0 13px; border: 1px solid #a8a8a8; border-radius: 4px; background: #fff; display: flex; align-items: center; padding: 0 9px 0 14px; font-size: 20px; white-space: nowrap; }
.secure { color: #0b8043; margin-left: 13px; width: 77px; height: 24px; line-height: 24px; border-right: 1px solid #bbb; letter-spacing: -.3px; }
.url { margin-left: 11px; color: #808080; letter-spacing: -.09px; }
.url b { font-weight: 400; color: #0b8043; }
.url i { font-style: normal; color: #111; }
.star { margin-left: auto; }
.exts { display: flex; align-items: center; gap: 24px; margin-left: 15px; height: 54px; }
.exts svg { width: 24px; height: 24px; }
.abp { font: bold 10.5px "Open Sans", sans-serif; fill: #fff; }
.wdot { width: 24px; font: 800 20px/28px "Open Sans", sans-serif; color: #00c853; text-align: center; white-space: nowrap; margin-top: -4px; }

/* workspace menu */
.pagebar { height: 41px; flex: none; display: flex; border-top: 1px solid #b4b4b4; border-bottom: 4px solid #3a3a3a; background: linear-gradient(#c9c9c9, #a4a4a4); font: bold 17.9px/37px "Liberation Sans", sans-serif; color: #1c1c1c; }
.house { width: 20px; height: 20px; margin: 8px 0 0 30px; }
.broken { width: 27px; height: 33px; margin: 6px 0 0 13px; }
.user { width: 221px; height: 38px; padding-left: 15px; background: linear-gradient(#1180cc, #175aa4); color: #c4d2de; letter-spacing: .05px; }
.m1 { margin-left: 15px; width: 115px; text-shadow: 0 2px 2px #ddd; }
.m2 { text-shadow: 0 2px 2px #ddd; }
.clock { margin-left: auto; padding-right: 30px; color: #7b7b7b; text-shadow: 0 2px 2px #ddd; }

/* console window */
.contitle { height: 47px; flex: none; margin: 0 1px 0 2px; display: flex; align-items: center; border-top: 1px solid #fff; border-bottom: 1px solid #fff; background: linear-gradient(#666, #333); padding: 0 16px 5px 15px; font: bold 17.9px "Liberation Sans", sans-serif; color: #fff; text-shadow: 0 2px 2px #000; }
.contitle span { margin-left: 7px; padding-top: 4px; }
.conbtns { margin-left: auto; display: flex; gap: 8px; }
.conbtns svg { width: 41px; height: 22px; border-radius: 2px; background: linear-gradient(#d4d4d4 48%, #aaa 50%, #c6c6c6); border: 1px solid #e0e0e0; }
.conbtns .red { background: linear-gradient(#e59c90 48%, #b8321e 50%, #d86a58); border-color: #7a1c2c; }
.console { position: relative; height: 742px; flex: none; margin: 0 2px; background: #323232; display: flex; padding-left: 346px; overflow: hidden; }
.vscroll { margin-left: auto; width: 23px; background: #f1f1f1; display: flex; flex-direction: column; align-items: center; padding: 10px 0; }
.vscroll svg { width: 11px; height: 6px; fill: #505050; }
.vscroll i { width: 21px; height: 284px; margin: 61px 0 auto 2px; background: #c1c1c1; }
.cursor { position: absolute; left: 1064px; top: 440px; width: 19px; height: 30px; }

/* launcher */
.launcher { width: 98px; background: #400433; border-right: 2px solid #8a7088; height: 742px; overflow: hidden; }
.dash { width: 97px; height: 26px; margin-bottom: 10px; }
.app { width: 97px; height: 88.400px; }
.writer { color: #13679b; }
.calc { color: #2a9c1c; }
.impress { color: #9a4414; }
.stack { width: 97px; height: 180px; margin-top: -4.500px; }
.amz { font: bold 29px "Liberation Sans", sans-serif; fill: #222; }

/* file manager */
.scp { width: 1102px; height: 742px; background: #d4d0c8; font: 16.4px "DejaVu Sans Condensed", "DejaVu Sans", sans-serif; font-stretch: condensed; color: #111; overflow: hidden; }
.cuttop { height: 12px; overflow: hidden; display: flex; align-items: flex-start; }
.cuttop > svg:first-child { margin-right: 36px; }
.cuttop span { width: 140px; line-height: 20px; margin-top: -14px; letter-spacing: .4px; white-space: nowrap; }
.cuttop i { width: 222px; height: 7px; background: #fff; border-right: 18px solid #dedbd4; margin-right: 20px; }
.sessions { height: 35px; display: flex; border-bottom: 2px solid #555; }
.sess { display: flex; align-items: center; white-space: nowrap; }
.sess.on { width: 565px; height: 36px; background: #d4d0c8; border-top: 2px solid #fff; border-left: 2px solid #fff; padding: 0 0 4px 10px; letter-spacing: .35px; }
.sess.on span { margin-left: 11px; }
.sess.off { width: 147px; height: 30px; margin-top: 4px; border-left: 2px solid #555; border-right: 2px solid #555; border-top: 1px solid #fff; padding: 0 0 2px 6px; letter-spacing: .35px; }
.sess.off span { margin-left: 7px; }
.panes { display: flex; gap: 8px; }
.pane { width: 547px; }
.tbrow { height: 37px; display: flex; gap: 3px; }
.tbrow.two { margin-top: 2px; height: 38px; }
.grp { height: 36px; background: #dbd8d0; border-radius: 4px; display: grid; align-items: center; white-space: nowrap; letter-spacing: .35px; }
.a1 { width: 229px; padding-left: 5px; grid-template-columns: 8px 150px 34px 25px; }
.a2 { width: 157px; padding-left: 6px; grid-template-columns: 8px 78px 34px 25px; }
.b1 { width: 117px; padding-left: 4px; grid-template-columns: 11px 34px 18px 34px 9px; }
.c1 { width: 193px; padding-left: 4px; grid-template-columns: 11px 34px 35px 35px 34px 9px 25px; }
.c2 { width: 265px; padding-left: 4px; grid-template-columns: 11px 34px 35px 35px 129px 13px; }
.d1 { width: 478px; padding-left: 5px; grid-template-columns: 10px 33px 65px 19px 8px 32px 42px 19px 33px 35px 32px 128px 13px; }
.d2 { width: 477px; padding-left: 6px; grid-template-columns: 10px 31px 89px 18px 8px 32px 42px 19px 34px 34px 32px 106px 13px; }
.d2 span { color: #8f8c87; }
.e1 { width: 64px; padding-left: 4px; grid-template-columns: 12px 31px 13px; }
.grip { width: 5px; height: 20px; }
.ic { width: 24px; height: 24px; }
.pl { width: 22px; height: 22px; }
.off { filter: grayscale(1) brightness(.85); opacity: .42; }
.off.dk { opacity: .7; filter: grayscale(1) brightness(1.1); }
.sess.off { filter: none; opacity: 1; }
.dd { width: 9px; height: 6px; fill: #000; }
.dd.gray { fill: #9a9791; }
.more { width: 13px; height: 9px; margin-bottom: 14px; }
.sep { width: 1px; height: 32px; background: #aaa7a0; }
.combo { height: 29px; width: 144px; background: #fff; display: flex; align-items: center; justify-content: space-between; padding: 1px 1px 1px 31px; }
.a2 .combo { width: 72px; padding-left: 30px; }
.combo em { width: 17px; height: 27px; background: #dbd8d0; display: flex; align-items: center; justify-content: center; }
.path { height: 29px; background: #0a246a; color: #f2f2f2; padding: 0 8px; line-height: 30px; letter-spacing: .5px; }
.remote .path { background: #808080; color: #d4d0c8; padding-left: 6px; letter-spacing: .6px; }
.list { height: 584px; width: 545px; border-left: 2px solid #555; border-top: 2px solid #555; border-right: 2px solid #eee; border-bottom: 1px solid #eee; background: #fff; display: flex; flex-direction: column; }
.remote .list { margin-left: 1px; }
.edge { height: 2px; margin: 3px 0 0 395px; background: #333; }
.head { height: 27px; flex: none; display: grid; grid-template-columns: 226px 105px 179px 31px; background: #d4d0c8; border-bottom: 2px solid #555; line-height: 25px; }
.remote .head { grid-template-columns: 224px 105px 212px; }
.head span { border-right: 2px solid #555; border-top: 1px solid #fff; border-left: 2px solid #fff; padding-left: 10px; overflow: hidden; letter-spacing: .4px; }
.head span:last-child { border-right: 0; letter-spacing: .7px; }
.head .r { text-align: right; padding-right: 10px; }
.rows { flex: 1; overflow: hidden; margin-top: -.500px; }
.row { height: 25.500px; line-height: 25.500px; display: grid; grid-template-columns: 27px 193px 100px 195px 24px; padding-left: 3px; overflow: hidden; white-space: nowrap; }
.row svg { width: 22px; height: 23px; }
.row.up svg { width: 12px; height: 11px; margin: 10px 0 0 5px; }
.row span:nth-of-type(1) { letter-spacing: .38px; }
.row.wide span:nth-of-type(1) { letter-spacing: .8px; }
.row span:nth-of-type(2) { text-align: right; }
.row span:nth-of-type(3) { padding-left: 16px; }
.local .row span:nth-of-type(3) { letter-spacing: .5px; }
.row span:nth-of-type(4) { overflow: hidden; }
.remote .row { grid-template-columns: 27px 192px 100px 215px; }
.remote .row span:nth-of-type(3) { letter-spacing: -.03px; }
.focus span:nth-of-type(1) { outline: 1px dotted #000; outline-offset: -1px; width: 197px; margin-left: -2px; padding-left: 2px; }
.hscroll { height: 25px; flex: none; display: flex; background: #e9e7e2; }
.hscroll b { width: 23px; display: flex; align-items: center; justify-content: center; background: #d4d0c8; border: 1px solid #fff; border-right: 2px solid #555; border-bottom: 2px solid #555; }
.hscroll b svg { width: 8px; height: 12px; }
.hscroll i { width: 364px; background: #d4d0c8; border: 2px solid #f2f0ec; border-right: 2px solid #555; border-bottom: 2px solid #555; }
.remote .hscroll i { width: 348px; }
.hscroll u { flex: 1; }

/* page footer */
.hint { height: 33px; flex: none; margin: 0 1px 0 2px; border-top: 3px solid #fff; box-shadow: inset 0 2px #b5b5b5; background: linear-gradient(#fff 10%, #cfcfcf 90%, #aaa); text-align: center; font: bold 16.500px/34px "Liberation Sans", sans-serif; color: #000; text-shadow: 0 2px 2px #ccc; }
.wall { height: 18px; flex: none; border-bottom: 2px solid #d4d4d4; background: linear-gradient(90deg, #505050, #525252 115px, #f0f0f0 119px, #f0f0f0 137px, #777 142px, #999 180px, #858585 265px, #c8c8c8 278px, #bbb 292px, #888 300px, #8d8d8d 375px, #eee 387px, #f4f4f4 400px, #666 404px, #666 440px, #0a0a0a 480px, #0a0a0a 520px, #6c6c6c 560px, #808080 1200px, #8c8c8c); }
.dock { height: 41px; flex: none; display: flex; align-items: flex-end; padding-left: 32px; background: linear-gradient(rgba(60,60,60,.1), rgba(40,40,40,.4)), linear-gradient(90deg, transparent 115px, rgba(255,255,255,.35) 122px, rgba(255,255,255,.3) 134px, transparent 142px, transparent 375px, rgba(255,255,255,.35) 385px, transparent 400px, transparent 450px, rgba(0,0,0,.6) 490px, rgba(0,0,0,.6) 510px, transparent 550px), #6c6c6c; font: bold 19.600px "Liberation Sans", sans-serif; color: #d4d4d4; overflow: hidden; }
.show { width: 28px; height: 24px; margin-right: 26px; }
.dtab { width: 225px; height: 34px; margin-right: 7px; display: flex; padding-left: 8px; border-radius: 8px 8px 0 0; background: rgba(50,50,50,.75); line-height: 44px; text-shadow: 0 2px 2px #000; white-space: nowrap; }
.labs { width: 33px; height: 26px; margin: 8px 9px 0 0; }
.pcv { width: 24px; height: 24px; margin: 5px 7px 0 0; }
.t3 { margin-left: 1px; padding-left: 7px; }
.brand { margin-left: auto; width: 151px; height: 36px; font: italic bold 25px/38px "Liberation Sans", sans-serif; letter-spacing: -.1px; color: #b8b8b8; }
.brand sup { font-size: 17px; font-style: normal; line-height: 0; vertical-align: 8px; font-weight: 400; }

/* taskbar */
.taskbar { height: 60px; flex: none; background: #000; display: flex; }
.start { width: 72px; display: flex; align-items: center; justify-content: center; }
.search { width: 516px; background: #333; display: flex; align-items: center; padding: 0 21px 0 13px; font-size: 19.500px; color: #a8a8a8; }
.search span { margin: 2px auto 0 13px; letter-spacing: -.1px; }
.tk { display: flex; align-items: center; justify-content: center; }
.tv { width: 72px; }
.ex { width: 61px; margin: 0 8px 0 11px; border-bottom: 3px solid #76b9ed; padding-top: 3px; }
.ch { width: 73px; background: linear-gradient(90deg, #333 66px, #111 66px, #111 68px, #222 68px); border-bottom: 3px solid #76b9ed; padding: 3px 2px 0 0; }
.st { width: 75px; }
.md { width: 73px; padding-right: 2px; }
.ec { width: 79px; padding-right: 2px; }
.wc { width: 61px; margin-left: 6px; border-bottom: 3px solid #76b9ed; padding: 3px 3px 0 0; }
.tray { margin-left: auto; width: 485px; display: flex; align-items: center; color: #fff; background: linear-gradient(90deg, transparent 477px, #555 477px, #555 479px, transparent 479px); font-size: 17.500px; }
.chev { width: 18px; height: 10px; }
.wifi { width: 20px; height: 20px; margin-left: 31px; }
.bat { width: 24px; height: 14px; margin-left: 25px; }
.spk { width: 23px; height: 20px; margin-left: 24px; }
.kbd { width: 34px; height: 20px; margin-left: 25px; }
.lang, .time { display: flex; flex-direction: column; align-items: center; line-height: 27px; white-space: nowrap; letter-spacing: -.3px; }
.lang { width: 36px; margin-left: 22px; }
.time { width: 94px; margin-left: 20px; }
.note { width: 26px; height: 25px; margin-left: 26px; }
```
